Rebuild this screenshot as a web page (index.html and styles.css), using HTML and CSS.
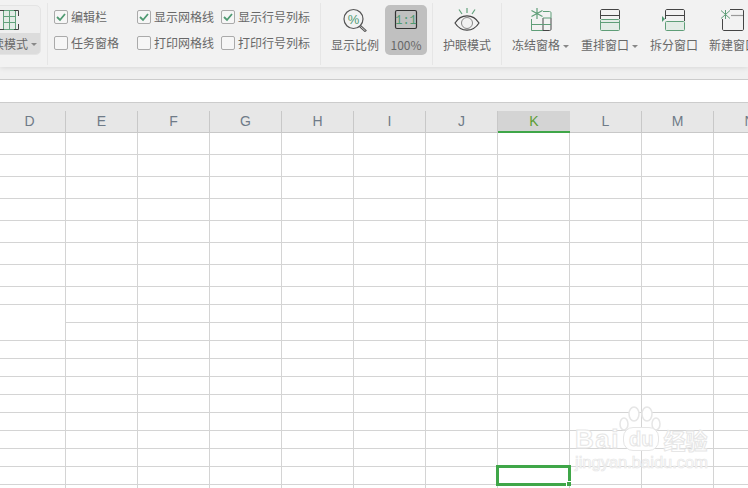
FILE: index.html
```html
<!DOCTYPE html>
<html lang="zh">
<head>
<meta charset="utf-8">
<title>视图</title>
<link rel="stylesheet" href="styles.css">
</head>
<body>
<div class="ribbon">
  <section class="group group-read">
    <div class="read-btn">
      <div class="read-top">
        <svg width="30" height="21" viewBox="0 0 30 21"><rect x="9.500" y="1.500" width="12" height="19" fill="#e3ece6"/><path d="M9.500 1.500H21.500V20.500H9.500ZM15.500 1.500V20.500M9.500 7.500H21.500M9.500 13.500H21.500" stroke="#62a27c" fill="none"/><path d="M20 1.500H24.500V7M24.500 15V20.500H20M10 1.500H5.500V7M5.500 15V20.500H10" stroke="#444" fill="none"/></svg>
      </div>
      <div class="read-bottom"><span>阅读模式</span><i class="caret"></i></div>
    </div>
  </section>
  <section class="group group-checks">
    <label class="check"><span class="box"><svg width="12" height="12" viewBox="0 0 12 12"><path d="M2 6L5 9L10 3" stroke="#4f9a72" stroke-width="1.800" fill="none"/></svg></span>编辑栏</label>
    <label class="check"><span class="box"><svg width="12" height="12" viewBox="0 0 12 12"><path d="M2 6L5 9L10 3" stroke="#4f9a72" stroke-width="1.800" fill="none"/></svg></span>显示网格线</label>
    <label class="check"><span class="box"><svg width="12" height="12" viewBox="0 0 12 12"><path d="M2 6L5 9L10 3" stroke="#4f9a72" stroke-width="1.800" fill="none"/></svg></span>显示行号列标</label>
    <label class="check"><span class="box"></span>任务窗格</label>
    <label class="check"><span class="box"></span>打印网格线</label>
    <label class="check"><span class="box"></span>打印行号列标</label>
  </section>
  <section class="group group-zoom">
    <div class="tool">
      <svg class="icon" width="30" height="26" viewBox="0 0 30 26"><circle cx="13.500" cy="13" r="9.500" fill="none" stroke="#555" stroke-width="1.200"/><path d="M20 20L26 25.500" stroke="#555" stroke-width="2.600"/><path d="M20.500 20.500L25.500 25" stroke="#eee" stroke-width=".8"/><text x="13.500" y="17.500" text-anchor="middle" class="icon-percent">%</text></svg>
      <span class="tool-label">显示比例</span>
    </div>
    <div class="tool tool-active">
      <svg class="icon" width="30" height="26" viewBox="0 0 30 26"><rect x="4.500" y="4.500" width="21" height="18" rx="1.500" fill="none" stroke="#333" stroke-width="1.200"/><text x="15" y="18" text-anchor="middle" class="icon-text">1:1</text></svg>
      <span class="tool-label">100%</span>
    </div>
  </section>
  <section class="group group-eye">
    <div class="tool">
      <svg class="icon" width="30" height="26" viewBox="0 0 30 26"><path d="M3 17C9 7.500 21 7.500 27 17C21 26.500 9 26.500 3 17Z" fill="none" stroke="#444" stroke-width="1.200"/><circle cx="15" cy="17" r="5.500" fill="none" stroke="#888"/><path d="M15 2V7M7 3.500L10 8M23 3.500L20 8" stroke="#62a27c" stroke-width="1.200"/></svg>
      <span class="tool-label">护眼模式</span>
    </div>
  </section>
  <section class="group group-window">
    <div class="tool">
      <svg class="icon" width="30" height="26" viewBox="0 0 30 26"><path d="M5.500 13V24.500H17" fill="none" stroke="#5f9e78"/><path d="M17 5.500H23.500C24.500 5.500 25 6 25 7V12" fill="none" stroke="#5f9e78"/><path d="M25 12V23C25 24 24.500 24.500 23.500 24.500H17M17 12V24.500" fill="none" stroke="#444"/><path d="M5.500 18.500H25M17 12H25" fill="none" stroke="#5f9e78"/><path d="M11 2V13M5.500 4.500L16.500 10.500M5.500 10.500L16.500 4.500" stroke="#5f9e78" stroke-width="1.200"/></svg>
      <span class="tool-label">冻结窗格<i class="caret"></i></span>
    </div>
    <div class="tool">
      <svg class="icon" width="30" height="26" viewBox="0 0 30 26"><path d="M5.500 13V5C5.500 4 6 3.500 7 3.500H23C24 3.500 24.500 4 24.500 5V13M5.500 9.500H24.500" fill="none" stroke="#444"/><rect x="5.500" y="13.500" width="19" height="11" rx="1" fill="#e3ece6" stroke="#5f9e78"/><path d="M5.500 16.500H24.500" stroke="#5f9e78"/></svg>
      <span class="tool-label">重排窗口<i class="caret"></i></span>
    </div>
    <div class="tool">
      <svg class="icon" width="30" height="26" viewBox="0 0 30 26"><path d="M6.500 13V5C6.500 4 7 3.500 8 3.500H24C25 3.500 25.500 4 25.500 5V15M6.500 9.500H25.500" fill="none" stroke="#444"/><rect x="6.500" y="15.500" width="19" height="9" rx="1" fill="#e3ece6" stroke="#5f9e78"/><path d="M3 10V16L6 13Z" fill="#4f9a72"/></svg>
      <span class="tool-label">拆分窗口</span>
    </div>
    <div class="tool">
      <svg class="icon" width="30" height="26" viewBox="0 0 30 26"><path d="M4.500 13V23C4.500 24 5 24.500 6 24.500H24C25 24.500 25.500 24 25.500 23V5C25.500 4 25 3.500 24 3.500H12" fill="none" stroke="#444"/><path d="M13 9.500H25" stroke="#999" stroke-width="1.200"/><path d="M7.500 4V13M3 4.500L12 12.500M3 12.500L12 4.500" stroke="#5f9e78"/></svg>
      <span class="tool-label">新建窗口</span>
    </div>
  </section>
</div>
<div class="ribbon-gap"></div>
<div class="formula"></div>
<div class="col-head">
  <div class="col">D</div><div class="col">E</div><div class="col">F</div><div class="col">G</div><div class="col">H</div><div class="col">I</div><div class="col">J</div><div class="col col-active">K</div><div class="col">L</div><div class="col">M</div><div class="col">N</div>
</div>
<div class="sheet">
  <div class="row row-tall"></div><div class="row row-tall"></div><div class="row row-tall"></div><div class="row row-tall"></div><div class="row row-tall"></div><div class="row row-tall"></div><div class="row row-tall"></div>
  <div class="row"></div><div class="row row-merged"></div><div class="row"></div><div class="row"></div><div class="row"></div><div class="row"></div><div class="row"></div><div class="row"></div><div class="row"></div><div class="row"></div><div class="row"></div><div class="row"></div>
</div>
<div class="selection"><i class="handle"></i></div>
<div class="watermark">
  <svg class="paw" width="42" height="26" viewBox="0 0 42 26"><g fill="#fff" stroke="#e6e6e6" stroke-width="1.500"><ellipse cx="5" cy="18" rx="4" ry="6"/><ellipse cx="15" cy="8" rx="5" ry="7"/><ellipse cx="28" cy="8" rx="5" ry="7"/><ellipse cx="37" cy="18" rx="4" ry="6"/></g></svg>
  <div class="wm-main"><span class="wm-bai">Bai</span><span class="wm-du">du</span><span class="wm-cn">经验</span></div>
  <div class="wm-url">jingyan.baidu.com</div>
</div>
</body>
</html>
```
FILE: styles.css
```css
* { box-sizing: border-box; }
html, body { margin: 0; padding: 0; }
body {
  position: relative;
  width: 748px;
  height: 488px;
  overflow: hidden;
  background: #fff;
  font-family: "Noto Sans CJK SC", "Liberation Sans", sans-serif;
  font-size: 12px;
  color: #686868;
}
.ribbon {
  position: relative;
  z-index: 1;
  display: flex;
  height: 67px;
  padding-top: 3px;
  background: #f2f2f2;
  box-shadow: 0 1px 5px rgba(0,0,0,.1);
  overflow: hidden;
  clip-path: inset(0 0 -6px 0);
}
.group {
  flex: none;
  height: 62px;
  border-right: 1px solid #e6e6e6;
}
.group-read { width: 72px; margin-left: -24px; padding-top: 2px; }
.read-btn {
  width: 65px;
  height: 50px;
  border-radius: 5px;
  overflow: hidden;
  border: 1px solid #e4e4e4;
  background: #efefef;
}
.read-top { height: 27px; padding: 3px 0 0 1px; display: flex; justify-content: center; }
.read-bottom {
  height: 22px;
  background: #dcdcdc;
  display: flex;
  align-items: center;
  justify-content: center;
  line-height: 16px;
}
.caret {
  display: inline-block;
  width: 0;
  height: 0;
  margin-left: 3px;
  border: 3px solid transparent;
  border-top: 3px solid #888;
  border-bottom: 0;
  vertical-align: middle;
}
.group-checks {
  width: 273px;
  padding: 7px 0 0 6px;
  display: grid;
  grid-template-columns: 83px 84px auto;
  grid-auto-rows: 14px;
  row-gap: 12px;
  align-content: start;
}
.check { display: flex; align-items: center; gap: 3px; line-height: 14px; white-space: nowrap; }
.box {
  flex: none;
  width: 14px;
  height: 14px;
  border: 1px solid #aaa;
  border-radius: 2px;
  background: #f6f6f6;
  display: flex;
}
.group-zoom { width: 112px; padding-left: 10px; display: flex; gap: 6px; }
.group-eye { width: 69px; padding-left: 10px; display: flex; }
.group-window { border-right: 0; padding-left: 10px; display: flex; gap: 12px; }
.group-window .tool:nth-child(3) { margin-right: -1px; }
.tool {
  flex: none;
  height: 50px;
  margin-top: 2px;
  padding-top: 1px;
  display: flex;
  flex-direction: column;
  align-items: center;
}
.tool-active { width: 42px; background: #c0c0c0; border-radius: 5px; }
.icon { flex: none; }
.icon-text { font: 12px "Liberation Mono", monospace; fill: #4f9a72; }
.icon-percent { font: 13px "Liberation Sans", sans-serif; fill: #4f9a72; }
.tool-label { margin-top: 5px; line-height: 16px; white-space: nowrap; }
.ribbon-gap { height: 13px; background: #f0f0f0; border-bottom: 1px solid #ccc; }
.formula { height: 23px; background: #fff; border-bottom: 1px solid #ccc; }
.col-head {
  display: flex;
  width: 826px;
  height: 30px;
  margin-left: -6px;
  padding-top: 8px;
  background: #e7e7e7;
  border-bottom: 1px solid #c8c8c8;
}
.col {
  flex: none;
  width: 72px;
  height: 21px;
  border-right: 1px solid #c8c8c8;
  text-align: center;
  font: 14px/21px "Liberation Sans", sans-serif;
  color: #6f7b88;
}
.col-active {
  height: 22px;
  background: #d4d4d4;
  border-right: 0;
  border-bottom: 2px solid #3fa648;
  color: #5d9e35;
}
.sheet {
  background-image: linear-gradient(to right, transparent 71px, #d4d4d4 71px);
  background-size: 72px 100%;
  background-position: -6px 0;
}
.row { height: 18px; border-bottom: 1px solid #d4d4d4; }
.row-tall { height: 22px; }
.row-merged { margin-left: 66px; }
.selection {
  position: absolute;
  left: 496px;
  top: 465px;
  width: 75px;
  height: 21px;
  border: 3px solid #3fa648;
}
.handle {
  position: absolute;
  right: -3px;
  bottom: -3px;
  width: 5px;
  height: 5px;
  background: #3fa648;
  border: 1px solid #fff;
  border-width: 1px 0 0 1px;
}
.watermark { position: absolute; left: 575px; top: 406px; width: 134px; font-family: "Liberation Sans", sans-serif; }
.paw { position: absolute; left: 44px; top: 0; }
.wm-main {
  position: absolute;
  left: 0;
  top: 20px;
  display: flex;
  align-items: center;
  height: 26px;
  font-weight: 700;
  color: #fff;
  -webkit-text-stroke: 1px #e6e6e6;
  white-space: nowrap;
}
.wm-bai { font-size: 26px; line-height: 26px; letter-spacing: 1.500px; }
.wm-du { font-size: 20px; margin-left: 3px; padding: 0 5px; border: 1px solid #e6e6e6; border-radius: 10px; line-height: 22px; background: #fff; }
.wm-cn { font: 700 22px/26px "Noto Sans CJK SC", sans-serif; margin-left: 4px; }
.wm-url {
  position: absolute;
  left: 0;
  top: 47px;
  font-size: 16.500px;
  line-height: 18px;
  color: #fff;
  -webkit-text-stroke: .7px #e6e6e6;
  white-space: nowrap;
}
```
